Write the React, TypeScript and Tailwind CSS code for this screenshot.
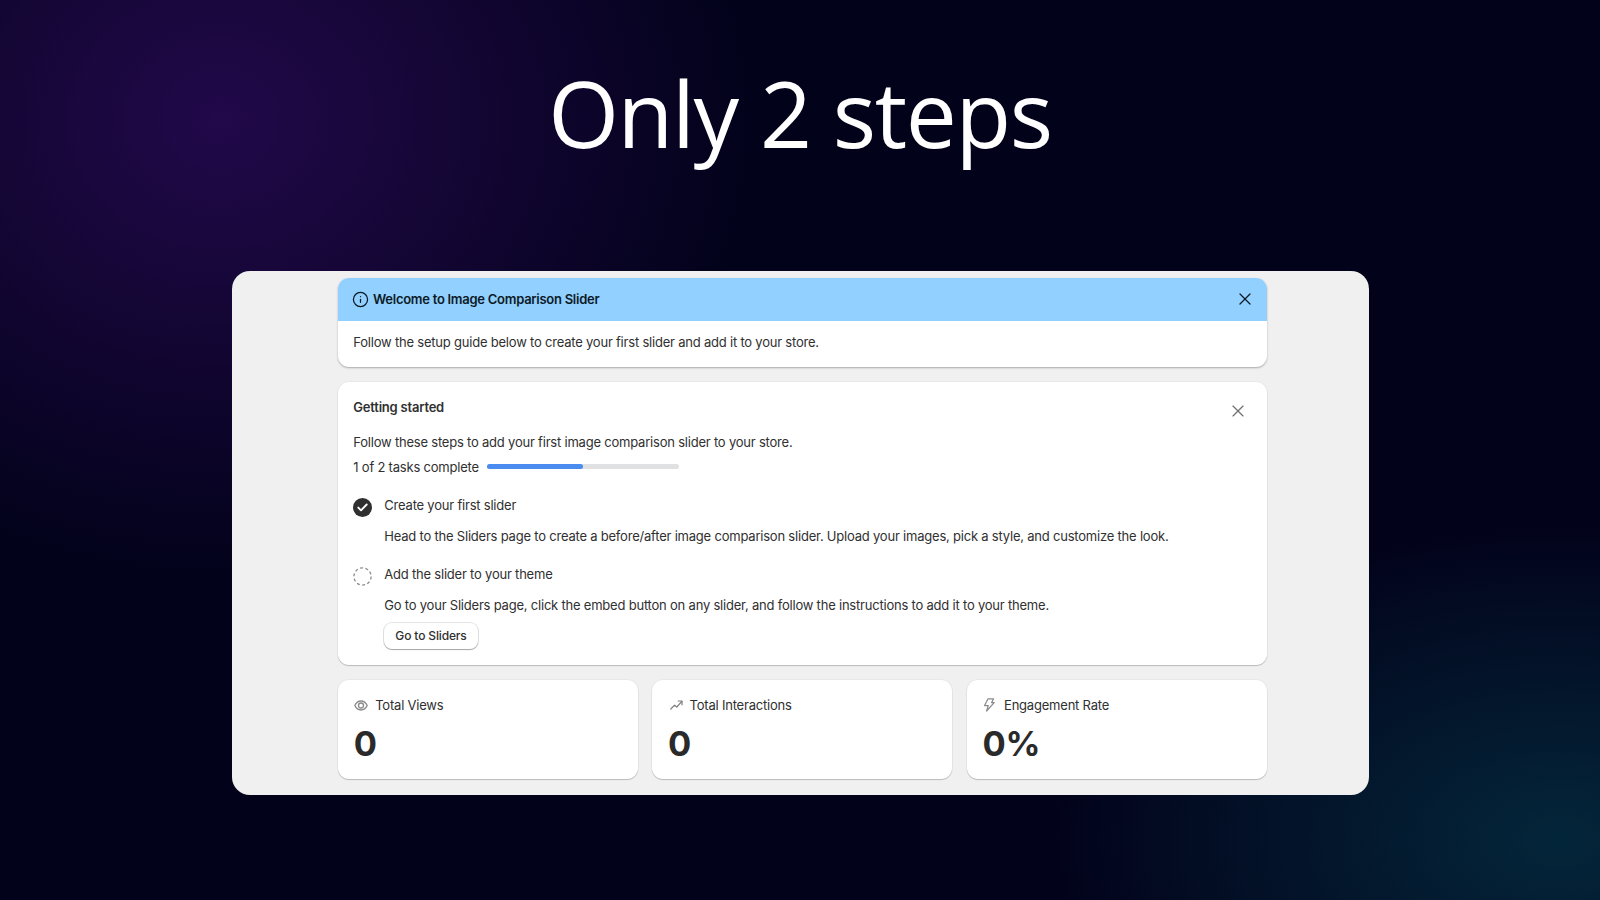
import React from "react";
import { Info, X } from "lucide-react";

const font = "font-['Inter','Liberation_Sans',sans-serif]";

function EyeIcon() {
  return (
    <svg width="14" height="11" viewBox="0 0 14 11" fill="none" stroke="#8a8a8a" strokeWidth="1.3">
      <path d="M0.8 5.5C2.2 2.6 4.4 1 7 1s4.8 1.6 6.2 4.5C11.8 8.4 9.6 10 7 10S2.2 8.4 0.8 5.5Z" />
      <circle cx="7" cy="5.5" r="2.5" />
    </svg>
  );
}

function TrendIcon() {
  return (
    <svg width="13" height="10" viewBox="0 0 13 10" fill="none" stroke="#7d7d7d" strokeWidth="1.2" strokeLinecap="round" strokeLinejoin="round">
      <path d="M0.8 9L4.6 5.2L6.8 7L11.8 1.4" />
      <path d="M8.2 1H12V4.8" />
    </svg>
  );
}

function BoltIcon() {
  return (
    <svg width="12" height="14" viewBox="0 0 12 14" fill="none" stroke="#8a8a8a" strokeWidth="1.2" strokeLinejoin="round">
      <path d="M5 0.8H10.6L8.6 4.6H11.2L3.6 13L5.2 7.6H1.6L5 0.8Z" />
    </svg>
  );
}

function Stat({ icon, label, value, iconPad }: { icon: React.ReactNode; label: string; value: string; iconPad: string }) {
  return (
    <div className="flex-1 h-[99.5px] bg-white rounded-[11px] shadow-[0_1px_1px_rgba(0,0,0,0.2),0_0_0_1px_rgba(0,0,0,0.03)] pl-[15.7px] pt-[15.5px]">
      <div className="flex items-center h-[20px] text-[13px] tracking-[-0.21px] text-[#303030]">
        <span className={`w-[21.5px] flex items-center ${iconPad}`}>{icon}</span>
        {label}
      </div>
      <div className="mt-[8.5px] h-[40px] leading-[40px] text-[34.5px] font-bold text-[#2a2a2a]">{value}</div>
    </div>
  );
}

export default function App() {
  return (
    <div className={`${font} w-[1600px] h-[900px] overflow-hidden bg-[#02021a] bg-[radial-gradient(ellipse_540px_460px_at_220px_120px,#22094a_0%,rgba(34,9,74,0)_100%),radial-gradient(ellipse_520px_320px_at_1560px_840px,#04263a_0%,rgba(4,38,58,0)_100%)]`}>
      <h1 className="h-[270.7px] pt-[58px] text-center text-white text-[91px] leading-[110px] font-['Open_Sans',sans-serif] font-normal tracking-[-1.4px]">
        Only 2 steps
      </h1>
      <div className="ml-[232px] w-[1137px] h-[524.5px] rounded-[18px] bg-[#f0f0f0] pt-[7.6px]">
        <div className="w-[928.7px] ml-[106px] flex flex-col text-[#303030] text-[13px] tracking-[-0.21px]">
          <div className="h-[88.7px] rounded-[11px] overflow-hidden bg-white shadow-[0_1px_2px_rgba(0,0,0,0.3)]">
            <div className="h-[42.4px] bg-[#91d0ff] flex items-center justify-between pl-[13.5px] pr-[12px] text-[#0c1a26] font-semibold">
              <div className="flex items-center gap-[4.5px]">
                <Info size={17} strokeWidth={1.8} />
                <span className="tracking-[-0.27px]">Welcome to Image Comparison Slider</span>
              </div>
              <X size={20} strokeWidth={1.5} />
            </div>
            <div className="pl-[15.3px] pt-[11.5px] leading-[20px]">
              Follow the setup guide below to create your first slider and add it to your store.
            </div>
          </div>

          <div className="relative mt-[15px] h-[283px] rounded-[11px] bg-white shadow-[0_1px_1px_rgba(0,0,0,0.2),0_0_0_1px_rgba(0,0,0,0.03)] pl-[15.3px] pt-[15px] leading-[20px]">
            <button className="absolute right-[19px] top-[19px] text-[#6f6f6f]">
              <X size={20} strokeWidth={1.4} />
            </button>
            <div className="font-semibold">Getting started</div>
            <div className="mt-[15px]">Follow these steps to add your first image comparison slider to your store.</div>
            <div className="mt-[5px] flex items-center">
              <span>1 of 2 tasks complete</span>
              <div className="ml-[8.5px] w-[192px] h-[5px] rounded-full bg-[#e0e1e3]">
                <div className="w-1/2 h-full rounded-full bg-[#4a8cf0]" />
              </div>
            </div>
            <div className="mt-[18px] flex">
              <div className="w-[31px] pt-[3px]">
                <div className="w-[19px] h-[19px] rounded-full bg-[#303030] flex items-center justify-center">
                  <svg width="11" height="9" viewBox="0 0 11 9" fill="none" stroke="#fff" strokeWidth="1.9" strokeLinecap="round" strokeLinejoin="round">
                    <path d="M1.3 4.6L4 7.3L9.7 1.5" />
                  </svg>
                </div>
              </div>
              <div>
                <div>Create your first slider</div>
                <div className="mt-[11px]">Head to the Sliders page to create a before/after image comparison slider. Upload your images, pick a style, and customize the look.</div>
              </div>
            </div>
            <div className="mt-[18.5px] flex">
              <div className="w-[31px] pt-[2.5px]">
                <svg width="19" height="19" viewBox="0 0 19 19" fill="none">
                  <circle cx="9.5" cy="9.5" r="8.6" stroke="#8a8a8a" strokeWidth="1.3" strokeDasharray="3 2.4" />
                </svg>
              </div>
              <div>
                <div>Add the slider to your theme</div>
                <div className="mt-[10.5px]">Go to your Sliders page, click the embed button on any slider, and follow the instructions to add it to your theme.</div>
                <button className="mt-[7.7px] w-[93.4px] h-[26.6px] rounded-[8px] bg-white text-[12px] tracking-[-0.15px] font-medium shadow-[0_1px_1px_rgba(0,0,0,0.28),0_0_0_1px_rgba(0,0,0,0.1)]">Go to Sliders</button>
              </div>
            </div>
          </div>

          <div className="mt-[15px] flex gap-[14.6px]">
            <Stat icon={<EyeIcon />} label="Total Views" value="0" iconPad="pl-0" />
            <Stat icon={<TrendIcon />} label="Total Interactions" value="0" iconPad="pl-[2px]" />
            <Stat icon={<BoltIcon />} label="Engagement Rate" value="0%" iconPad="pl-0" />
          </div>
        </div>
      </div>
    </div>
  );
}
